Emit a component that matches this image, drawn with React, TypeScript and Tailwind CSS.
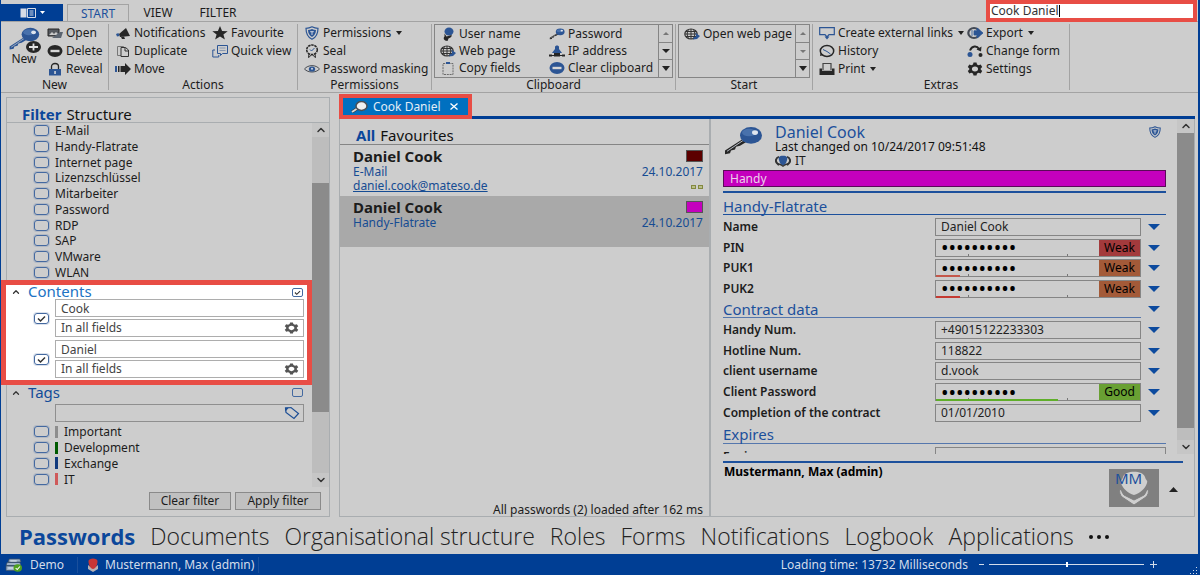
import React, { useState } from 'react';
import { ChevronDown, ChevronUp } from 'lucide-react';

type IconProps = { className?: string };

const DARK = '#262626';
const BLUE = '#2c5594';

/* ---------- Icons ---------- */

function Svg({ className = 'h-[14px] w-4', box = '0 0 16 14', children }: IconProps & { box?: string; children: React.ReactNode }) {
  return (
    <svg className={`shrink-0 ${className}`} viewBox={box} fill="none" preserveAspectRatio="none" aria-hidden="true">
      {children}
    </svg>
  );
}

function KeyIcon({ className, shaft = DARK }: IconProps & { shaft?: string }) {
  return (
    <Svg className={className} box="0 0 40 32">
      <path d="M21 13 2 26v4l5-1 1-3 4-1 1-3 4-1 8-5z" fill={shaft} />
      <path d="m22 14-18 13" stroke="#b9bec6" strokeWidth="1" />
      <ellipse cx="28" cy="10" rx="11" ry="9" fill={BLUE} />
      <ellipse cx="26" cy="7" rx="7" ry="4" fill="#5b83bd" opacity=".6" />
      <ellipse cx="32" cy="7" rx="3" ry="2.5" fill="#dfe5ee" />
    </Svg>
  );
}

const OpenIcon = () => (
  <Svg>
    <path d="M1 3h11v7H1z" fill="#55595f" stroke={DARK} />
    <path d="m2 9 3-3 2 2 2-2 3 3z" fill="#c9c9c9" />
    <path d="M5 12h9l2-6h-3" fill="#5b6470" />
  </Svg>
);

const MinusIcon = ({ color = DARK }: { color?: string }) => (
  <Svg>
    <ellipse cx="8" cy="7" rx="7.5" ry="6" fill={color} />
    <path d="M3.5 5.8h9v2.4h-9z" fill="#d6d6d6" />
  </Svg>
);

const LockIcon = () => (
  <Svg>
    <path d="M4.5 7V4.500c0-4 7-4 7 0V7" stroke={DARK} strokeWidth="1.300" />
    <path d="M2 7h12v6.500H2z" fill={BLUE} />
    <path d="M7.300 9h1.500v3H7.300z" fill="#ddd" />
  </Svg>
);

const MegaphoneIcon = () => (
  <Svg>
    <path d="m4 8 7-6 4 8-10 1z" fill={DARK} />
    <path d="m1 8 2.500-1 1 3-2.500.5z" fill={BLUE} />
    <path d="m6 11 3-.5 1 2.500H7z" fill={DARK} />
  </Svg>
);

const DuplicateIcon = () => (
  <Svg>
    <path d="M2.500 2.500h6v9h-6z" stroke="#777" />
    <path d="M6 3.500h4.500l3 2.500v6.500H6z" fill="#cdcdcd" stroke="#333" />
    <path d="M10 3.500V7h3.500" stroke="#333" />
  </Svg>
);

const MoveIcon = () => (
  <Svg>
    <path d="M0 4h2v6H0z" fill={BLUE} />
    <path d="M3 4h1.500v6H3zM5.500 4H10V1l6 6-6 6v-3H5.500z" fill={DARK} />
  </Svg>
);

const StarIcon = () => (
  <Svg>
    <path d="m8 0 2.100 4.900 5.600.3-4.300 3.200 1.500 5L8 10.600l-4.900 2.800 1.500-5L.3 5.200l5.600-.3z" fill={DARK} />
  </Svg>
);

const QuickViewIcon = () => (
  <Svg>
    <path d="M5.500 1.500h10v8h-5l-2 2v-2h-3z" stroke={BLUE} />
    <path d="M7.500 4h6M7.500 6.500h6" stroke="#8797b0" />
    <path d="M3 6H.8v7h6v-2" stroke={BLUE} />
  </Svg>
);

const ShieldIcon = ({ className }: IconProps) => (
  <Svg className={className}>
    <path d="M8 .8c2 1 4 1.500 6 1.500C14 8 12 11.500 8 13.300 4 11.500 2 8 2 2.300c2 0 4-.5 6-1.500z" stroke={BLUE} strokeWidth="1.200" />
    <path d="M8 3c1.200.6 2.600 1 4 1-.2 3.500-1.500 5.700-4 7-2.500-1.300-3.800-3.500-4-7 1.400 0 2.800-.4 4-1z" fill={BLUE} />
    <path d="M8 5.500v3.500M6.200 5.700h3.600" stroke="#cfd6e2" />
  </Svg>
);

const SealIcon = () => (
  <Svg>
    <ellipse cx="8" cy="5.800" rx="5.300" ry="4.800" stroke={DARK} strokeWidth="1.500" strokeDasharray="2.500 .7" />
    <path d="m6 5.500 1.500 1.500L10.500 4" stroke={BLUE} />
    <path d="m5 10-.5 3.500L6.500 12l1-1.500M11 10l.5 3.500L9.500 12l-1-1.500" stroke={DARK} />
  </Svg>
);

const EyeIcon = () => (
  <Svg>
    <path d="M.5 7C4 2.500 12 2.500 15.500 7 12 11 4 11 .5 7z" stroke="#454a52" />
    <ellipse cx="8" cy="7" rx="3.200" ry="2.600" fill={BLUE} />
    <circle cx="8" cy="6.700" r="1" fill="#cfd6e2" />
  </Svg>
);

const UserIcon = () => (
  <Svg>
    <ellipse cx="9" cy="4.500" rx="4.500" ry="4" fill={BLUE} />
    <path d="m4.500 6.500 2 3 5-1.500c1 2-2 3-3 3.500l-1 2.500c-4-.3-4.500-3-3-4.500z" fill={DARK} />
  </Svg>
);

const GlobeIcon = () => (
  <Svg>
    <ellipse cx="7" cy="7" rx="6.200" ry="5" stroke="#333" strokeWidth="1.200" />
    <path d="M7 2v10M1 7h12M2 4.500h10M2 9.500h10M4.500 2.500c-1.800 3-1.800 6 0 9M9.500 2.500c1.800 3 1.800 6 0 9" stroke="#333" />
    <path d="m9 12.500 1-2.500 2-.5V7.500l-1-2 5 3.500-3 3z" fill={BLUE} />
  </Svg>
);

const ClipboardIcon = () => (
  <Svg>
    <path d="M3 2.500h10v11H3z" stroke="#6b6b6b" strokeDasharray="2 .8" />
    <path d="M6 1h4v2H6z" fill={BLUE} />
  </Svg>
);

const NetworkIcon = () => (
  <Svg>
    <path d="M6 3c0-2 4-2 4 0v2l3 4H3l3-4z" fill={BLUE} />
    <path d="M0 10.500h3v2H0zM5 9h6v3.500H5zM13 10.500h3v2h-3z" fill={DARK} />
    <path d="M3 11.500h10" stroke={DARK} />
  </Svg>
);

const LinkIcon = () => (
  <Svg>
    <path d="M.7 1.700h14.600v7H10L8 11 6 8.700H.7z" stroke={BLUE} strokeWidth="1.200" />
    <path d="m8 13.500-2.500-3h5z" fill={BLUE} />
  </Svg>
);

const HistoryIcon = () => (
  <Svg>
    <ellipse cx="8" cy="7" rx="6.700" ry="5.500" stroke={DARK} strokeWidth="1.500" />
    <path d="m4 5.500 4 2 3.500 2.500" stroke={BLUE} />
    <path d="m1 12 .5-3 3 2z" fill={DARK} />
  </Svg>
);

const PrintIcon = () => (
  <Svg>
    <path d="M4 8V1.500h8V8" stroke="#444" strokeWidth="1.200" />
    <path d="M.5 6.500h2.500v2.200h10V6.500h2.500V13H.5z" fill={DARK} />
  </Svg>
);

const ExportIcon = () => (
  <Svg>
    <ellipse cx="7" cy="7" rx="5.700" ry="5" stroke="#444a54" strokeWidth="2.200" />
    <path d="M5 4v6M7 4.800h3V2l6 5-6 5V9H7z" fill={BLUE} stroke={BLUE} strokeWidth=".8" />
  </Svg>
);

const ChangeIcon = () => (
  <Svg>
    <path d="M3 6.500C5 1.500 10 1.500 12 5" stroke={DARK} strokeWidth="2" />
    <path d="m14.500 2.500-.5 5-4.500-2z" fill={DARK} />
    <circle cx="3" cy="10.500" r="2.500" fill={BLUE} />
    <circle cx="13.500" cy="11" r="2" fill={DARK} />
  </Svg>
);

const GearIcon = ({ className, color = DARK }: IconProps & { color?: string }) => (
  <Svg className={className}>
    <path
      d="M6.500.5h3l.5 1.900 1.700.9 2-.7 1.500 2.500L13.700 6.400v1.200l1.500 1.300-1.500 2.500-2-.7-1.700.9-.5 1.900h-3L6 11.600l-1.700-.9-2 .7L.8 8.900l1.500-1.300V6.400L.8 5.100l1.500-2.500 2 .7L6 2.400zM8 4.500C3.900 4.500 3.900 9.500 8 9.500s4.100-5 0-5z"
      fill={color}
      fillRule="evenodd"
    />
  </Svg>
);

const TagIcon = () => (
  <Svg>
    <path d="M1.500 2 7 1.500l7.500 6-4.500 5-8-6z" stroke="#1d4f96" strokeWidth="1.200" />
    <path d="M1 1.500h4l-3.500 4z" fill="#1d4f96" />
  </Svg>
);

const GroupIcon = () => (
  <Svg className="h-3 w-4">
    <path d="M4 2C1 3 0 7 2 9.500L4 12M12 2c3 1 4 5 2 7.500L12 12" stroke="#333" strokeWidth="2" />
    <path d="M8 1c4 0 5 2 4 5-1 4-2 6-4 6s-3-2-4-6c-1-3 0-5 4-5z" fill={BLUE} />
    <path d="m3 10 3 1.500 2 1.500 2-1.500 3-1.500" stroke="#333" strokeWidth="1.500" />
  </Svg>
);

const ServerIcon = () => (
  <Svg className="h-[14px] w-[17px]">
    <path d="M4 1h10l1 3H3zM2 4.500h12l1 3H1zM1 8h11v4.500H1z" fill="#9fb2c9" stroke="#3a4f66" strokeWidth=".7" />
    <path d="M3 10h6M5 3h6" stroke="#e7edf5" />
    <ellipse cx="12" cy="10" rx="4" ry="3.700" fill="#4fa11f" />
    <path d="m10 10 1.500 1.500L14 8.500" stroke="#fff" />
  </Svg>
);

const UserBadgeIcon = () => (
  <Svg className="h-[14px] w-3" box="0 0 12 14">
    <path d="M1 7c3 3 7 3 10 0v4l-5 3-5-3z" fill="#b8b1b5" />
    <path d="M1.500 3c0-3.500 9-3.500 9 0 0 4-2 8-4.500 8S1.500 7 1.500 3z" fill="#c93636" />
  </Svg>
);

function Triangle({ up = false, className = 'h-1 w-2 text-[#222]' }: IconProps & { up?: boolean }) {
  return (
    <svg className={`shrink-0 ${className}`} viewBox="0 0 10 6" preserveAspectRatio="none" aria-hidden="true">
      <path d={up ? 'M0 6h10L5 0z' : 'M0 0h10L5 6z'} fill="currentColor" />
    </svg>
  );
}

/* ---------- Ribbon ---------- */

type Action = { label: string; icon: React.ReactNode; menu?: boolean };

function ActionList({ actions, className = '' }: { actions: Action[]; className?: string }) {
  return (
    <div className={`flex flex-col ${className}`}>
      {actions.map((a) => (
        <button key={a.label} className="flex h-[18px] items-center gap-[3px] whitespace-nowrap">
          {a.icon}
          <span>{a.label}</span>
          {a.menu && <Triangle className="ml-[2px] h-1 w-[6px] text-[#222]" />}
        </button>
      ))}
    </div>
  );
}

function RibbonGroup({ title, className = '', children }: { title: string; className?: string; children: React.ReactNode }) {
  return (
    <section className={`flex flex-col border-r border-[#a3a3a3] ${className}`}>
      <div className="flex h-[54px] shrink-0">{children}</div>
      <div className="text-center leading-[14px]">{title}</div>
    </section>
  );
}

function Gallery({ canScroll, children }: { canScroll: boolean; children: React.ReactNode }) {
  return (
    <div className="flex flex-1 border border-[#858585]">
      <div className="flex flex-1">{children}</div>
      <div className="flex w-[14px] flex-col divide-y divide-[#858585] border-l border-[#858585]">
        <button aria-label="Scroll up" className="flex flex-1 items-center justify-center">
          <Triangle up className="h-[3px] w-[6px] text-[#777]" />
        </button>
        <button aria-label="Scroll down" className="flex flex-1 items-center justify-center">
          <Triangle className={canScroll ? 'h-1 w-2 text-[#222]' : 'h-[3px] w-[6px] text-[#777]'} />
        </button>
        <button aria-label="Show all" className="flex flex-1 items-center justify-center">
          <Triangle className="h-[5px] w-2 text-[#222]" />
        </button>
      </div>
    </div>
  );
}

function Ribbon() {
  return (
    <div className="flex h-[72px] border-y border-[#a3a3a3] py-[2px]">
      <RibbonGroup title="New" className="w-[108px]">
        <button className="flex w-[46px] flex-col items-center pt-[3px]">
          <span className="relative">
            <KeyIcon className="h-6 w-8" shaft={BLUE} />
            <svg className="absolute -right-[1px] -bottom-[2px] h-3 w-[15px]" viewBox="0 0 15 12" aria-hidden="true">
              <ellipse cx="7.500" cy="6" rx="7.500" ry="6" fill={DARK} />
              <path d="M3 6h9M7.500 2.500v7" stroke="#e0e0e0" strokeWidth="1.800" />
            </svg>
          </span>
          <span className="mt-[2px] leading-3">New</span>
        </button>
        <ActionList
          actions={[
            { label: 'Open', icon: <OpenIcon /> },
            { label: 'Delete', icon: <MinusIcon /> },
            { label: 'Reveal', icon: <LockIcon /> },
          ]}
        />
      </RibbonGroup>
      <RibbonGroup title="Actions" className="w-[189px]">
        <ActionList
          className="w-[97px] pl-[6px]"
          actions={[
            { label: 'Notifications', icon: <MegaphoneIcon /> },
            { label: 'Duplicate', icon: <DuplicateIcon /> },
            { label: 'Move', icon: <MoveIcon /> },
          ]}
        />
        <ActionList
          className="pl-[6px]"
          actions={[
            { label: 'Favourite', icon: <StarIcon /> },
            { label: 'Quick view', icon: <QuickViewIcon /> },
          ]}
        />
      </RibbonGroup>
      <RibbonGroup title="Permissions" className="w-[134px]">
        <ActionList
          className="pl-[6px]"
          actions={[
            { label: 'Permissions', icon: <ShieldIcon />, menu: true },
            { label: 'Seal', icon: <SealIcon /> },
            { label: 'Password masking', icon: <EyeIcon /> },
          ]}
        />
      </RibbonGroup>
      <RibbonGroup title="Clipboard" className="w-[244px] px-[2px]">
        <Gallery canScroll>
          <ActionList
            className="w-[114px] pl-[5px]"
            actions={[
              { label: 'User name', icon: <UserIcon /> },
              { label: 'Web page', icon: <GlobeIcon /> },
              { label: 'Copy fields', icon: <ClipboardIcon /> },
            ]}
          />
          <ActionList
            actions={[
              { label: 'Password', icon: <KeyIcon className="h-3 w-4" /> },
              { label: 'IP address', icon: <NetworkIcon /> },
              { label: 'Clear clipboard', icon: <MinusIcon color={BLUE} /> },
            ]}
          />
        </Gallery>
      </RibbonGroup>
      <RibbonGroup title="Start" className="w-[137px] px-[2px]">
        <Gallery canScroll={false}>
          <ActionList className="pl-[5px]" actions={[{ label: 'Open web page', icon: <GlobeIcon /> }]} />
        </Gallery>
      </RibbonGroup>
      <RibbonGroup title="Extras" className="w-[257px]">
        <ActionList
          className="w-[151px] pl-[6px]"
          actions={[
            { label: 'Create external links', icon: <LinkIcon />, menu: true },
            { label: 'History', icon: <HistoryIcon /> },
            { label: 'Print', icon: <PrintIcon />, menu: true },
          ]}
        />
        <ActionList
          className="pl-[3px]"
          actions={[
            { label: 'Export', icon: <ExportIcon />, menu: true },
            { label: 'Change form', icon: <ChangeIcon /> },
            { label: 'Settings', icon: <GearIcon /> },
          ]}
        />
      </RibbonGroup>
    </div>
  );
}

function TitleBar() {
  return (
    <header className="flex h-[21px] items-end">
      <button aria-label="Application menu" className="flex h-[17px] w-[62px] items-center justify-center gap-1 bg-[#003e94]">
        <svg className="h-[10px] w-4" viewBox="0 0 16 10" aria-hidden="true">
          <path d="M.5.500h6v9h-6z" fill="#d6dbe6" />
          <path d="M7.500.500h8v9h-8z" fill="none" stroke="#d6dbe6" />
          <path d="M9.500 3h4M9.500 5h4M9.500 7h4" stroke="#d6dbe6" />
        </svg>
        <Triangle className="h-[3px] w-[5px] text-white" />
      </button>
      <nav className="flex h-[17px] items-center pl-1">
        <button className="-mb-[1px] h-[18px] w-[62px] border border-b-0 border-[#a3a3a3] bg-[#cdcdcd] leading-4 text-[#1c509c]">START</button>
        <button className="w-[58px]">VIEW</button>
        <button className="w-[62px]">FILTER</button>
      </nav>
      <label className="z-10 -mb-[1px] mr-[1px] ml-auto flex h-[22px] w-[211px] items-center border-4 border-[#e84d45] bg-white">
        <input aria-label="Search" defaultValue="Cook Daniel" className="field-sizing-content bg-transparent pl-[1px] text-[#333] outline-none" />
        <span className="h-3 w-[1px] bg-black" />
      </label>
    </header>
  );
}

/* ---------- Filter panel ---------- */

function CheckBox({ id, label, checked = false, small = false }: { id: string; label?: string; checked?: boolean; small?: boolean }) {
  const [on, setOn] = useState(checked);
  return (
    <span className="relative flex shrink-0">
      <input
        id={id}
        type="checkbox"
        aria-label={label}
        checked={on}
        onChange={(e) => setOn(e.target.checked)}
        className={`appearance-none border border-[#4469a0] ${small ? 'h-[9px] w-[11px] rounded-[2px]' : 'h-[11px] w-[15px] rounded-[3px] ring-1 ring-[#4469a0]/20'}`}
      />
      {on && (
        <svg className="pointer-events-none absolute inset-0 h-full w-full" viewBox="0 0 15 11" fill="none" aria-hidden="true">
          <path d="m4 5.500 2.500 2.500L11 3.500" stroke="#333" strokeWidth="1.500" />
        </svg>
      )}
    </span>
  );
}

const CATEGORIES = ['E-Mail', 'Handy-Flatrate', 'Internet page', 'Lizenzschlüssel', 'Mitarbeiter', 'Password', 'RDP', 'SAP', 'VMware', 'WLAN'];

const TAGS = [
  { label: 'Important', bar: 'bg-[#8d8d8d]' },
  { label: 'Development', bar: 'bg-[#005a00]' },
  { label: 'Exchange', bar: 'bg-[#123a7c]' },
  { label: 'IT', bar: 'bg-[#cf5a5a]' },
];

function FilterHeading({ title, checked, className = '' }: { title: string; checked: boolean; className?: string }) {
  return (
    <div className={`flex items-center pl-1 ${className}`}>
      <button aria-label={`Collapse ${title}`} className="w-[17px]">
        <ChevronUp className="h-[10px] w-[10px] text-[#333]" strokeWidth={3} />
      </button>
      <h3 className="flex-1 pb-[2px] text-[15px] leading-3">{title}</h3>
      <CheckBox id={`all-${title}`} label={`All ${title}`} checked={checked} small />
    </div>
  );
}

function ContentFilter({ term }: { term: string }) {
  return (
    <div className="flex items-center gap-[6px] pr-[3px] pl-[27px]">
      <CheckBox id={`term-${term}`} label={`Use ${term}`} checked />
      <div className="flex flex-1 flex-col gap-[2px]">
        <input aria-label="Search term" defaultValue={term} className="h-[18px] w-full border border-[#adadad] px-[5px] text-[#444] outline-none" />
        <div className="flex h-[18px] items-center border border-[#adadad] pr-1">
          <input aria-label={`Fields for ${term}`} defaultValue="In all fields" className="min-w-0 flex-1 px-[5px] text-[#444] outline-none" />
          <button aria-label="Field settings">
            <GearIcon className="h-3 w-[15px]" color="#555" />
          </button>
        </div>
      </div>
    </div>
  );
}

function ScrollBar({ before, thumb }: { before: string; thumb: string }) {
  return (
    <div className="flex w-[17px] shrink-0 flex-col bg-[#bdbdbd]">
      <button aria-label="Scroll up" className="flex h-[14px] items-center justify-center bg-[#c6c6c6]">
        <ChevronUp className="h-3 w-3 text-[#333]" strokeWidth={3} />
      </button>
      <div className={before} />
      <div className={`bg-[#8b8b8b] ${thumb}`} />
      <button aria-label="Scroll down" className="mt-auto flex h-[14px] items-center justify-center bg-[#c6c6c6]">
        <ChevronDown className="h-3 w-3 text-[#333]" strokeWidth={3} />
      </button>
    </div>
  );
}

function FilterPanel() {
  return (
    <aside className="mt-1 flex w-[324px] shrink-0 flex-col border border-[#a9adb0]">
      <div className="flex h-[25px] items-end gap-[5px] border-b border-[#a9adb0] pl-[15px] text-[15px] leading-4">
        <button className="font-bold text-[#0b479b]">Filter</button>
        <button className="text-[#111]">Structure</button>
      </div>
      <div className="flex">
        <div className="min-w-0 flex-1">
          <ul className="grid h-[157px] auto-rows-fr pl-[27px]">
            {CATEGORIES.map((c) => (
              <li key={c} className="flex items-center gap-[6px]">
                <CheckBox id={c} />
                <label htmlFor={c} className="leading-[15px]">{c}</label>
              </li>
            ))}
          </ul>
          <div className="-ml-[6px] flex h-[105px] flex-col border-[5px] border-[#e84d45] bg-white pl-[1px]">
            <FilterHeading title="Contents" checked className="h-[14px] pr-1 text-[#2173c4]" />
            <div className="flex flex-col gap-[3px]">
              <ContentFilter term="Cook" />
              <ContentFilter term="Daniel" />
            </div>
          </div>
          <div>
            <FilterHeading title="Tags" checked={false} className="h-[15px] pr-[9px] text-[#134b98]" />
            <div className="mt-1 mr-2 ml-12 flex h-[18px] items-center border border-[#8f8f8f] pr-[3px]">
              <input aria-label="Search tags" className="min-w-0 flex-1 px-1 outline-none" />
              <TagIcon />
            </div>
            <ul className="mt-[2px] grid h-[63px] auto-rows-fr pl-[27px]">
              {TAGS.map((t) => (
                <li key={t.label} className="flex items-center gap-[6px]">
                  <CheckBox id={t.label} />
                  <label htmlFor={t.label} className="flex items-center gap-[6px] leading-[15px]">
                    <span className={`h-3 w-[3px] ${t.bar}`} />
                    {t.label}
                  </label>
                </li>
              ))}
            </ul>
          </div>
        </div>
        <ScrollBar before="h-[46px]" thumb="h-[229px]" />
      </div>
      <div className="mt-[5px] flex justify-end gap-1 pr-[8px]">
        <button className="h-[18px] w-[82px] border border-[#8a8a8a] bg-[#c0c0c0] leading-4">Clear filter</button>
        <button className="h-[18px] w-[86px] border border-[#8a8a8a] bg-[#c0c0c0] leading-4">Apply filter</button>
      </div>
    </aside>
  );
}

/* ---------- Password list ---------- */

function PasswordEntry({ form, date, mail, swatch, selected = false }: { form: string; date: string; mail?: string; swatch: string; selected?: boolean }) {
  return (
    <li className={`flex h-[51px] justify-between pt-[3px] pr-[6px] pl-[13px] text-[#164c93] ${selected ? 'bg-[#a9a9a9]' : ''}`}>
      <div>
        <div className="text-[15px] leading-4 font-bold text-[#1c1c1c]">Daniel Cook</div>
        <div className="leading-4">{form}</div>
        {mail && (
          <a href={`mailto:${mail}`} className="block leading-3 underline">
            {mail}
          </a>
        )}
      </div>
      <div className="flex flex-col items-end">
        <div className={`mt-[2px] h-3 w-[17px] border border-[#555] ${swatch}`} />
        <div className="mt-[2px] leading-4">{date}</div>
        {mail && (
          <div className="mt-[5px] flex gap-[2px]">
            <span className="h-1 w-[5px] border border-[#83883f] bg-[#b9bf8a]" />
            <span className="h-1 w-[5px] border border-[#83883f] bg-[#b9bf8a]" />
          </div>
        )}
      </div>
    </li>
  );
}

function PasswordList() {
  return (
    <div className="flex w-[371px] shrink-0 flex-col border-r-2 border-[#a9adb0]">
      <div className="flex h-[26px] items-end gap-[5px] border-b border-[#858585] pl-4 text-[15px] leading-[17px]">
        <button className="font-bold text-[#0b479b]">All</button>
        <button className="text-[#111]">Favourites</button>
      </div>
      <ul>
        <PasswordEntry form="E-Mail" date="24.10.2017" mail="daniel.cook@mateso.de" swatch="bg-[#5c0000]" />
        <PasswordEntry form="Handy-Flatrate" date="24.10.2017" swatch="bg-[#c400bd]" selected />
      </ul>
      <div className="mt-auto pr-[6px] text-right leading-3">All passwords (2) loaded after 162 ms</div>
    </div>
  );
}

/* ---------- Detail view ---------- */

type Field = { label: string; value: string; strength?: string; badge?: string; meter?: string };

const CARD_FIELDS: Field[] = [
  { label: 'Name', value: 'Daniel Cook' },
  { label: 'PIN', value: '0123456789', strength: 'Weak', badge: 'bg-[#a33a3c]', meter: 'w-0' },
  { label: 'PUK1', value: '0123456789', strength: 'Weak', badge: 'bg-[#a35a38]', meter: 'w-6 bg-[#c4574a]' },
  { label: 'PUK2', value: '0123456789', strength: 'Weak', badge: 'bg-[#a35a38]', meter: 'w-6 bg-[#c43a32]' },
];

const CONTRACT_FIELDS: Field[] = [
  { label: 'Handy Num.', value: '+49015122233303' },
  { label: 'Hotline Num.', value: '118822' },
  { label: 'client username', value: 'd.vook' },
  { label: 'Client Password', value: '0123456789', strength: 'Good', badge: 'bg-[#69a033]', meter: 'w-[122px] bg-[#5fae2a]' },
  { label: 'Completion of the contract', value: '01/01/2010' },
];

function FieldRow({ field }: { field: Field }) {
  const id = `field-${field.label}`;
  return (
    <div className="flex items-center">
      <label htmlFor={id} className="w-[212px] shrink-0 font-semibold">
        {field.label}
      </label>
      <div className="relative flex h-[18px] min-w-0 flex-1 border border-[#858585]">
        <input
          id={id}
          type={field.strength ? 'password' : 'text'}
          defaultValue={field.value}
          className={`min-w-0 flex-1 px-[5px] outline-none ${field.strength ? 'text-xl leading-4 text-black' : 'text-[#222]'}`}
        />
        {field.strength && (
          <>
            <span className={`w-[41px] shrink-0 text-center leading-4 text-black ${field.badge}`}>{field.strength}</span>
            <span className="absolute bottom-0 left-[32px] h-[2px] w-[1px] bg-[#777]" />
            <span className="absolute bottom-0 left-[131px] h-[2px] w-[1px] bg-[#777]" />
            <span className={`absolute -bottom-[1px] left-0 h-[2px] ${field.meter}`} />
          </>
        )}
      </div>
      <button aria-label={`${field.label} menu`} className="flex w-[25px] shrink-0 justify-center">
        <Triangle className="h-[6px] w-3 text-[#0c4a9e]" />
      </button>
    </div>
  );
}

function DetailView() {
  return (
    <div className="flex min-w-0 flex-1 flex-col">
      <div className="flex min-h-0 flex-1">
        <div className="min-w-0 flex-1 overflow-hidden pt-[6px] pr-[11px] pl-3">
          <div className="flex h-[45px] items-start">
            <KeyIcon className="mt-[1px] h-[30px] w-10" />
            <div className="flex-1 pl-3">
              <h2 className="text-base leading-[14px] text-[#1c509c]">Daniel Cook</h2>
              <p className="leading-[15px] text-[#111]">Last changed on 10/24/2017 09:51:48</p>
              <p className="flex items-center gap-1 leading-[14px]">
                <GroupIcon />
                IT
              </p>
            </div>
            <ShieldIcon className="mt-[1px] mr-1 h-3 w-[14px]" />
          </div>
          <div className="h-[17px] border border-[#5a0a58] bg-[#c400bd] pl-[6px] leading-[15px] text-[#ecd0ea]">Handy</div>
          <div className="mt-1 h-[2px] bg-[#1c509c]" />
          <h3 className="flex h-[22px] items-end border-b border-[#1c509c] text-[15px] leading-4 text-[#1c509c]">Handy-Flatrate</h3>
          <div className="mt-[2px] grid h-[82px] auto-rows-fr grid-cols-1">
            {CARD_FIELDS.map((f) => (
              <FieldRow key={f.label} field={f} />
            ))}
          </div>
          <div className="flex h-[19px] items-center">
            <h3 className="flex-1 self-stretch border-b border-[#5577ad] text-[15px] leading-[21px] text-[#1c509c]">Contract data</h3>
            <button aria-label="Contract data menu" className="flex w-[25px] justify-center">
              <Triangle className="h-[6px] w-3 text-[#0c4a9e]" />
            </button>
          </div>
          <div className="mt-[2px] grid h-[103px] auto-rows-fr grid-cols-1">
            {CONTRACT_FIELDS.map((f) => (
              <FieldRow key={f.label} field={f} />
            ))}
          </div>
          <h3 className="h-[21px] border-b border-[#5577ad] text-[15px] leading-[22px] text-[#1c509c]">Expires</h3>
          <div className="flex pt-[3px]">
            <label htmlFor="expires" className="w-[212px] leading-5 font-semibold">
              Expires
            </label>
            <input id="expires" className="h-[18px] min-w-0 flex-1 border border-[#858585]" />
          </div>
        </div>
        <ScrollBar before="h-0" thumb="h-[295px]" />
      </div>
      <footer className="mt-[7px] mr-[11px] ml-3 flex h-[55px] shrink-0 border-t-2 border-[#1c509c]">
        <div className="flex-1 pl-[1px] leading-[18px] font-bold text-black">Mustermann, Max (admin)</div>
        <div className="relative mt-[6px] h-[38px] w-[50px] bg-[#808080]">
          <svg className="h-full w-full" viewBox="0 0 50 38" aria-hidden="true">
            <path d="M14 8C16 1 34 1 36 8c1 4 3 3 2 6-2 6-7 10-13 12-6-2-11-6-13-12-1-3 1-2 2-6z" fill="#cfcfcf" />
            <path d="M11 20c2 1 2 4 4 6l10 5 10-5c2-2 2-5 4-6 1 3 0 6-2 8L25 36 13 28c-2-2-3-5-2-8z" fill="#cfcfcf" stroke="#808080" />
          </svg>
          <span className="absolute top-0 left-[6px] text-[15px] leading-[18px] text-[#1c509c]">MM</span>
        </div>
        <button aria-label="Expand footer" className="mr-[5px] ml-[10px]">
          <Triangle up className="h-[5px] w-[9px] text-[#222]" />
        </button>
      </footer>
    </div>
  );
}

/* ---------- Bottom bars ---------- */

const MODULES = ['Passwords', 'Documents', 'Organisational structure', 'Roles', 'Forms', 'Notifications', 'Logbook', 'Applications'];

function ModuleNav() {
  return (
    <nav className="flex h-[37px] shrink-0 items-center gap-[15px] pt-[2px] pl-[18px] font-['Open_Sans',sans-serif] whitespace-nowrap text-[#222]">
      {MODULES.map((m, i) => (
        <a key={m} href={`#${m}`} className={i === 0 ? 'text-[22px] font-bold text-[#0b479b]' : 'text-[23px] font-light'}>
          {m}
        </a>
      ))}
      <button aria-label="More modules" className="flex gap-1">
        <span className="h-1 w-1 rounded-full bg-[#111]" />
        <span className="h-1 w-1 rounded-full bg-[#111]" />
        <span className="h-1 w-1 rounded-full bg-[#111]" />
      </button>
    </nav>
  );
}

function StatusBar() {
  return (
    <footer className="flex h-[21px] shrink-0 items-center bg-[#003e94] pl-1 text-[#d3dcea]">
      <div className="flex h-4 w-[73px] items-center gap-2 border-r border-[#1a4f9c]">
        <ServerIcon />
        Demo
      </div>
      <div className="ml-[9px] flex h-4 items-center gap-[6px] border-r border-[#1a4f9c] pr-1">
        <UserBadgeIcon />
        Mustermann, Max (admin)
      </div>
      <div className="ml-auto pr-[11px]">Loading time: 13732 Milliseconds</div>
      <button aria-label="Zoom out" className="h-[1px] w-[5px] bg-[#d3dcea]" />
      <input
        type="range"
        aria-label="Zoom"
        defaultValue={50}
        className="mx-[5px] h-2 w-[155px] appearance-none bg-transparent [&::-webkit-slider-runnable-track]:h-[1px] [&::-webkit-slider-runnable-track]:bg-[#d3dcea] [&::-webkit-slider-thumb]:-mt-[2px] [&::-webkit-slider-thumb]:h-[5px] [&::-webkit-slider-thumb]:w-[2px] [&::-webkit-slider-thumb]:appearance-none [&::-webkit-slider-thumb]:bg-white"
      />
      <button aria-label="Zoom in" className="mr-8 w-[9px]">
        <svg className="h-[7px] w-[9px]" viewBox="0 0 9 7" aria-hidden="true">
          <path d="M1 3.500h7M4.500 0v7" stroke="#d3dcea" />
        </svg>
      </button>
      <svg className="h-2 w-2 self-end" viewBox="0 0 8 8" fill="#d3dcea" aria-hidden="true">
        <path d="M6 0h1v1H6zM6 3h1v1H6zM6 6h1v1H6zM3 3h1v1H3zM3 6h1v1H3zM0 6h1v1H0z" />
      </svg>
    </footer>
  );
}

export default function App() {
  return (
    <div className="flex h-screen min-h-[575px] flex-col overflow-hidden border-r-2 border-l border-[#003e94] bg-[#cdcdcd] font-['Noto_Sans',sans-serif] text-xs text-[#1c1c1c]">
      <TitleBar />
      <Ribbon />
      <div className="flex min-h-0 flex-1 gap-[9px] pr-[3px] pl-[5px]">
        <FilterPanel />
        <main className="mt-[1px] flex min-w-0 flex-1 flex-col">
          <div className="flex h-[25px] shrink-0 items-end">
            <div className="flex h-[25px] w-[133px] items-center border-4 border-[#e84d45] bg-[#0070c0] pl-2 text-[#e3edf6]">
              <svg className="h-3 w-[17px] shrink-0" viewBox="0 0 17 12" fill="none" aria-hidden="true">
                <path d="m1 11 6-4" stroke="#333" strokeWidth="3" />
                <path d="m1 11 6-4" stroke="#d9d9d9" strokeWidth="2" />
                <ellipse cx="10.500" cy="5" rx="5.500" ry="4.500" fill="#f0f0f0" stroke="#4b4f55" strokeWidth="1.500" />
              </svg>
              <button className="pl-[5px] whitespace-nowrap">Cook Daniel</button>
              <button aria-label="Close tab" className="pl-[9px]">
                <svg className="h-[7px] w-2" viewBox="0 0 8 7" aria-hidden="true">
                  <path d="m.5.500 7 6M7.500.500l-7 6" stroke="#fff" strokeWidth="1.300" />
                </svg>
              </button>
            </div>
            <div className="h-[3px] flex-1 bg-[#003e94]" />
          </div>
          <div className="flex min-h-0 flex-1 border border-t-0 border-[#a9adb0]">
            <PasswordList />
            <DetailView />
          </div>
        </main>
      </div>
      <ModuleNav />
      <StatusBar />
    </div>
  );
}
